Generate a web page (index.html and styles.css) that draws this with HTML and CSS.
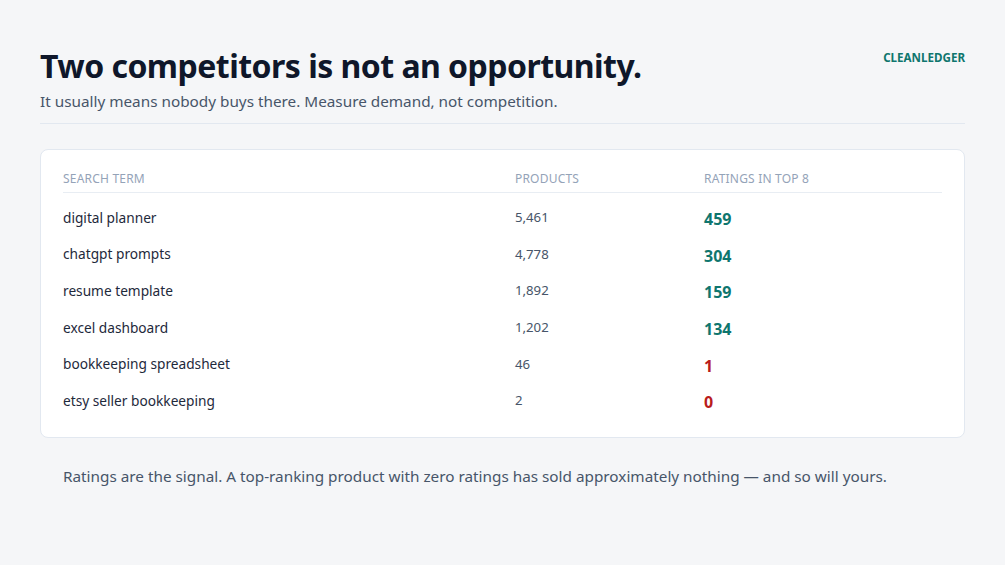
FILE: index.html
```html
<!DOCTYPE html>
<html lang="en">
<head>
<meta charset="utf-8">
<title>Two competitors is not an opportunity.</title>
<link rel="stylesheet" href="styles.css">
</head>
<body>
<main class="slide">
  <header class="head">
    <div class="titles">
      <h1 class="title">Two competitors is not an opportunity.</h1>
      <p class="subtitle">It usually means nobody buys there. Measure demand, not competition.</p>
    </div>
    <div class="brand">CLEANLEDGER</div>
  </header>
  <section class="card">
    <div class="row hrow">
      <div>SEARCH TERM</div>
      <div>PRODUCTS</div>
      <div>RATINGS IN TOP 8</div>
    </div>
    <div class="row"><div class="term">digital planner</div><div class="num">5,461</div><div class="rating good">459</div></div>
    <div class="row"><div class="term">chatgpt prompts</div><div class="num">4,778</div><div class="rating good">304</div></div>
    <div class="row"><div class="term">resume template</div><div class="num">1,892</div><div class="rating good">159</div></div>
    <div class="row"><div class="term">excel dashboard</div><div class="num">1,202</div><div class="rating good">134</div></div>
    <div class="row"><div class="term">bookkeeping spreadsheet</div><div class="num">46</div><div class="rating bad">1</div></div>
    <div class="row"><div class="term">etsy seller bookkeeping</div><div class="num">2</div><div class="rating bad">0</div></div>
  </section>
  <p class="note">Ratings are the signal. A top-ranking product with zero ratings has sold approximately nothing — and so will yours.</p>
</main>
</body>
</html>
```
FILE: styles.css
```css
* { box-sizing: border-box; }
html, body { margin: 0; padding: 0; }
body {
  background: #f5f6f8;
  font-family: "Noto Sans", "Open Sans", sans-serif;
  color: #0f172a;
  width: 1005px;
  height: 565px;
  overflow: hidden;
}
.slide { padding: 40px 40px 0 40px; }
.head {
  display: flex;
  justify-content: space-between;
  align-items: flex-start;
  border-bottom: 1.5px solid #e2e8f0;
  padding-bottom: 10px;
}
.title {
  margin: 0;
  font-size: 32px;
  font-weight: 700;
  line-height: 52px;
  color: #0f172a;
  letter-spacing: -0.53px;
}
.subtitle {
  margin: -2px 0 0 0;
  font-size: 15.3px;
  line-height: 23px;
  color: #475569;
}
.brand {
  margin-top: 10px;
  font-size: 11.6px;
  font-weight: 700;
  color: #0f766e;
  letter-spacing: 0;
}
.card {
  margin-top: 25px;
  background: #fff;
  border: 1.5px solid #e2e8f0;
  border-radius: 8px;
  padding: 20px 22px 18px 22px;
}
.row {
  display: grid;
  grid-template-columns: 452px 189px 1fr;
  align-items: center;
  height: 36.6px;
}
.hrow {
  height: 23px;
  align-items: start;
  border-bottom: 1px solid #e8edf3;
  font-size: 12px;
  color: #94a3b8;
  letter-spacing: 0.2px;
  margin-bottom: 6px;
}
.term { font-size: 13.7px; color: #1e293b; }
.num { font-size: 13.2px; color: #475569; }
.rating { font-size: 16px; font-weight: 700; padding-top: 4px; }
.good { color: #0f766e; }
.bad { color: #b91c1c; }
.note {
  margin: 28px 0 0 23px;
  font-size: 15.3px;
  color: #475569;
}
```
